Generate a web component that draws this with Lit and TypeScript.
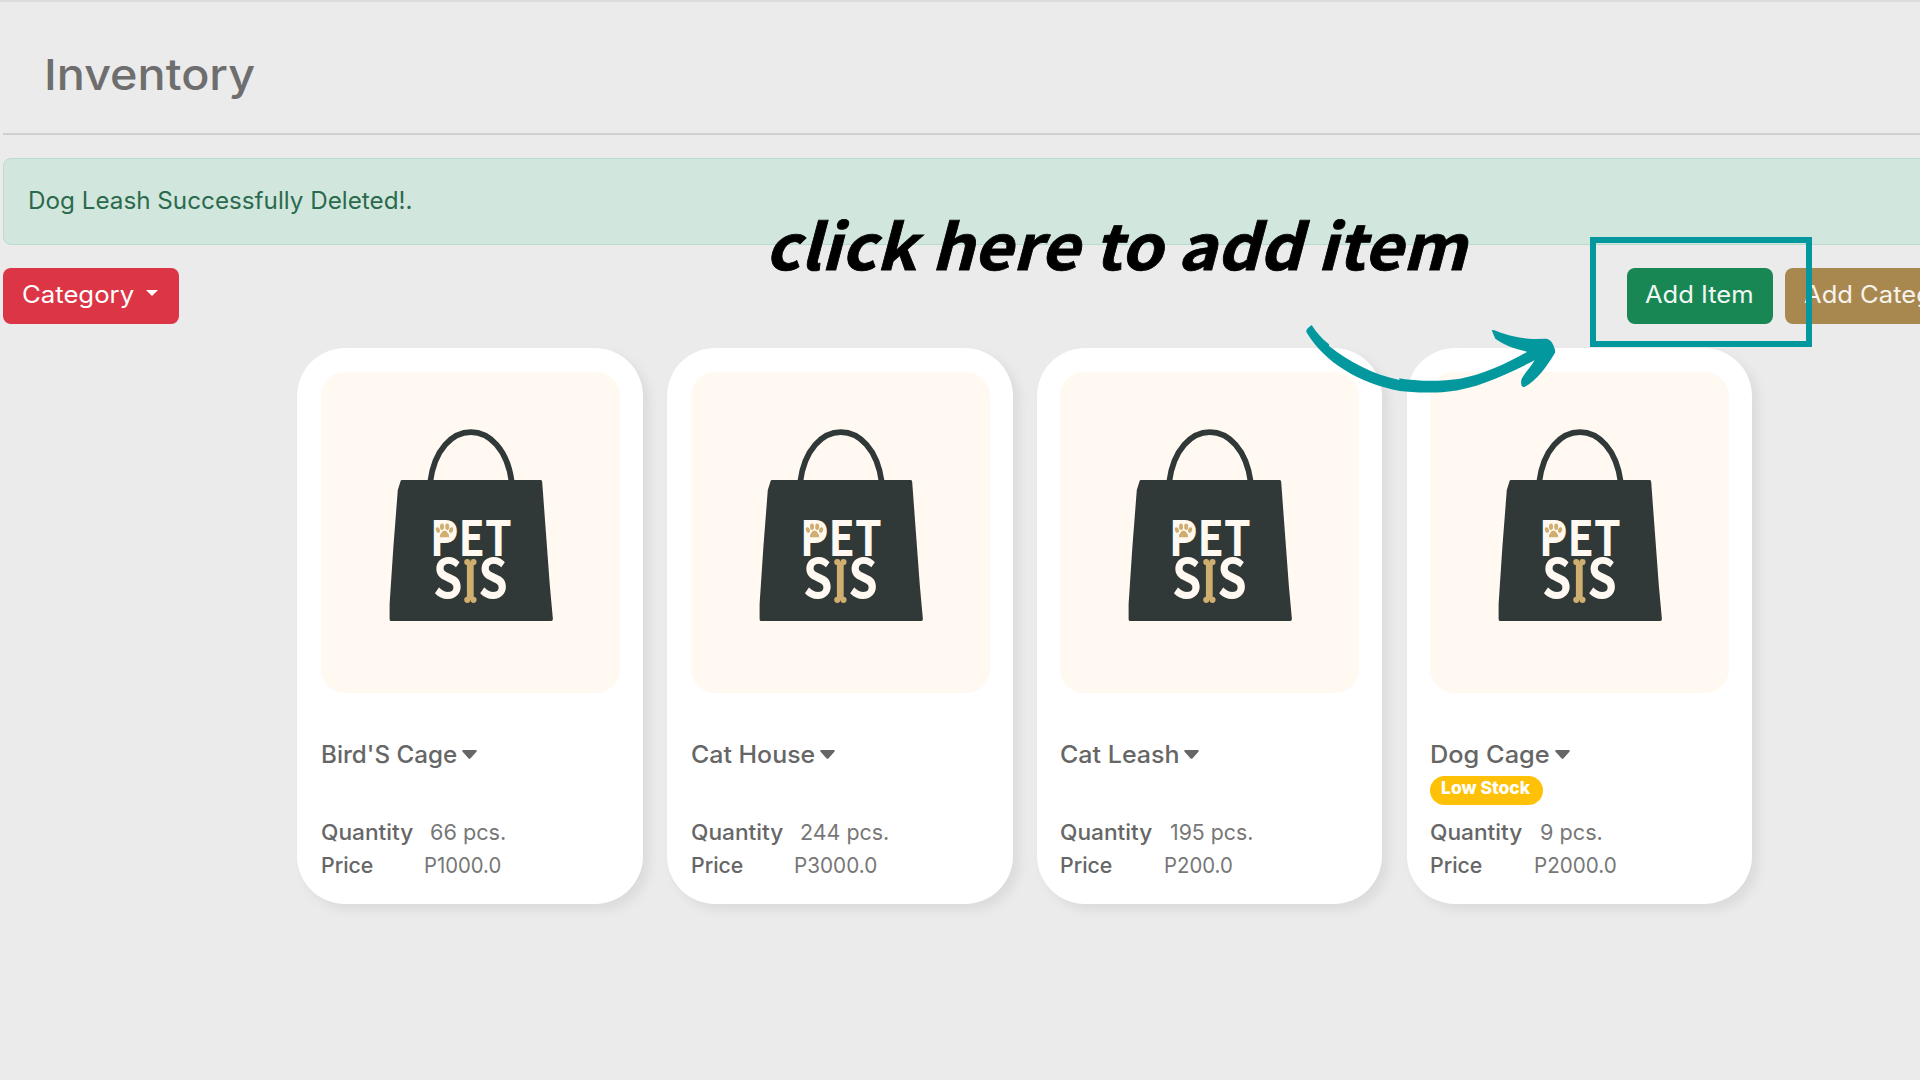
import { LitElement, html, css, svg } from "lit";
import { customElement, property } from "lit/decorators.js";
import { styleMap } from "lit/directives/style-map.js";

interface Item {
  name: string;
  nameWidth: number;
  quantity: string;
  quantityWidth: number;
  price: string;
  priceWidth: number;
  low?: boolean;
}

const ITEMS: Item[] = [
  { name: "Bird'S Cage", nameWidth: 134, quantity: "66 pcs.", quantityWidth: 74, price: "P1000.0", priceWidth: 75.5 },
  { name: "Cat House", nameWidth: 122, quantity: "244 pcs.", quantityWidth: 87, price: "P3000.0", priceWidth: 81.5 },
  { name: "Cat Leash", nameWidth: 117, quantity: "195 pcs.", quantityWidth: 81, price: "P200.0", priceWidth: 67 },
  { name: "Dog Cage", nameWidth: 117.5, quantity: "9 pcs.", quantityWidth: 60.5, price: "P2000.0", priceWidth: 81, low: true },
];

const measurer = document.createElement("canvas").getContext("2d")!;

/** A single line of text stretched so that it spans a given width. */
@customElement("fitted-text")
export class FittedText extends LitElement {
  static styles = css`
    :host { display: block; white-space: pre; }
    .line { display: block; transform-origin: 0 50%; }
  `;
  @property() text = "";
  @property() font = "";
  @property({ type: Number }) span = 0;

  render() {
    measurer.font = this.font;
    const m = measurer.measureText(this.text);
    const natural = m.actualBoundingBoxLeft + m.actualBoundingBoxRight;
    const scale = this.span / natural;
    return html`<span
      class="line"
      style=${styleMap({ width: `${this.span + 2}px`, transform: `scaleX(${scale.toFixed(4)})` })}
    >${this.text}</span>`;
  }
}

const fitted = (text: string, font: string, span: number) =>
  html`<fitted-text .text=${text} .font=${font} .span=${span}></fitted-text>`;

@customElement("item-card")
export class ItemCard extends LitElement {
  static styles = css`
    :host {
      display: flex;
      flex-direction: column;
      box-sizing: border-box;
      width: 345.5px;
      height: 555.5px;
      padding: 23.5px 23px 0 23.5px;
      border-radius: 48px;
      background: #fff;
      box-shadow: 6px 6px 12px rgba(0, 0, 0, 0.07);
      color: #666;
    }
    .photo { display: block; width: 299px; height: 321.5px; border-radius: 24px; background: #fff9f2; }
    .logo { font-family: "Noto Sans CJK SC", sans-serif; font-weight: 700; fill: #fff9f2; }
    .title {
      display: flex;
      align-items: center;
      gap: 5px;
      margin-top: 43.5px;
      font: 500 24px/36px Inter, sans-serif;
    }
    .caret { width: 15px; height: 9px; margin-top: -1px; fill: #666; }
    .status { height: 43.2px; }
    .badge {
      display: flex;
      box-sizing: border-box;
      width: 113px;
      height: 29.5px;
      margin-top: 3px;
      padding-left: 11px;
      border-radius: 15px;
      background: #ffc107;
      color: #fff;
      font: 800 17px/25px Inter, sans-serif;
    }
    .row { display: flex; font: 400 22px/33.4px Inter, sans-serif; color: #777; }
    .label { font-weight: 500; color: #666; }
    .quantity .label { width: 109.5px; }
    .price .label { width: 103.5px; }
  `;
  @property({ attribute: false }) item!: Item;

  private bag() {
    return svg`<g transform="translate(-0.7 0)">
      <path d="M109.9 110C118.5 43.5 182.6 43.5 191.4 110" fill="none" stroke="#313938" stroke-width="5.8"/>
      <path d="M81.5 108H220.5Q221.8 108 221.9 110L225.5 159L229.5 213L232.6 247Q232.6 249 231 249H70.5Q69.3 249 69.3 247V232L73 176L77.5 118L80 110Q80.2 108 81.5 108Z" fill="#313938"/>
      <text class="logo" x="109.8" y="184" font-size="49" textLength="81.5" lengthAdjust="spacingAndGlyphs">PET</text>
      <ellipse cx="124.5" cy="160" rx="8.5" ry="8"/>
      <g fill="#cfae70">
        <ellipse cx="117.6" cy="158" rx="1.9" ry="2.9" transform="rotate(-20 117.6 158)"/>
        <ellipse cx="121.7" cy="154.8" rx="2" ry="3.2"/>
        <ellipse cx="126.9" cy="154.8" rx="2" ry="3.2"/>
        <ellipse cx="130.8" cy="158" rx="1.9" ry="2.9" transform="rotate(20 130.8 158)"/>
        <path d="M124.2 158.6Q126.5 158.8 127.4 161Q129.2 162.2 128.8 165.2H119.6Q119.2 162.2 121 161Q121.9 158.8 124.2 158.6Z"/>
      </g>
      <text class="logo" x="112.8" y="225.8" font-size="54" textLength="29.5" lengthAdjust="spacingAndGlyphs">S</text>
      <text class="logo" x="158" y="225.8" font-size="54" textLength="29.5" lengthAdjust="spacingAndGlyphs">S</text>
      <g fill="#cfae70">
        <rect x="146.6" y="190" width="6.8" height="38"/>
        <circle cx="147" cy="190" r="3.1"/><circle cx="153.2" cy="190" r="3.1"/>
        <circle cx="147" cy="227.8" r="3.1"/><circle cx="153.2" cy="227.8" r="3.1"/>
      </g>
    </g>`;
  }

  render() {
    const i = this.item;
    return html`
      <svg class="photo" viewBox="0 0 299 321.5" fill="#fff9f2">${this.bag()}</svg>
      <div class="title">
        ${fitted(i.name, "500 24px Inter", i.nameWidth)}
        <svg class="caret" viewBox="0 0 15 9"><path d="M1.2 0H13.8Q15.4.3 14.4 1.8L8.6 8.3Q7.5 9.4 6.4 8.3L.6 1.8Q-.4.3 1.2 0Z"/></svg>
      </div>
      <div class="status">
        ${i.low ? html`<div class="badge">${fitted("Low Stock", "800 17px Inter", 90)}</div>` : ""}
      </div>
      <div class="row quantity">
        <span class="label">${fitted("Quantity", "500 22px Inter", 91.5)}</span>
        ${fitted(i.quantity, "400 22px Inter", i.quantityWidth)}
      </div>
      <div class="row price">
        <span class="label">${fitted("Price", "500 22px Inter", 50.5)}</span>
        ${fitted(i.price, "400 22px Inter", i.priceWidth)}
      </div>
    `;
  }
}

@customElement("app-root")
export class AppRoot extends LitElement {
  static styles = css`
    :host {
      display: block;
      position: relative;
      box-sizing: border-box;
      width: 1920px;
      height: 1080px;
      overflow: hidden;
      border-top: 2px solid #dcdcdc;
      background: #ebebeb;
      font-family: Inter, sans-serif;
    }
    .page { padding-left: 3.4px; }
    .header {
      box-sizing: border-box;
      height: 133px;
      padding: 40px 0 0 40.5px;
      border-bottom: 2px solid #d0d0d0;
      color: #6e6e6e;
      font: 500 43px/64px Inter, sans-serif;
    }
    .alert {
      box-sizing: border-box;
      width: 1940px;
      height: 87.5px;
      margin-top: 22.5px;
      padding: 23px 23.5px;
      border: 1.5px solid #badbcc;
      border-radius: 8px;
      background: #d1e7dd;
      color: #2c6a4d;
      font-size: 24px;
      line-height: 38px;
    }
    .toolbar { display: flex; width: 2100px; margin-top: 23px; }
    .btn {
      display: flex;
      align-items: center;
      box-sizing: border-box;
      height: 56px;
      padding: 0 18.5px 3px;
      border-radius: 8px;
      color: #fff;
      font-size: 24px;
      line-height: 36px;
      white-space: nowrap;
    }
    .category { width: 175.5px; gap: 12px; background: #dc3545; }
    .category svg { width: 12px; height: 6px; margin-top: -3px; fill: #fff; }
    .add-item { width: 146.5px; margin-left: 1448px; background: #198754; color: #f0f7f3; }
    .add-category { width: 220px; margin-left: 11.5px; padding-left: 19.5px; background: #a98850; color: #f7f3ed; }
    .cards { display: flex; gap: 24.3px; padding: 24.3px 0 0 293.9px; }
    .cards item-card { flex: none; }
    .note {
      position: absolute;
      left: 765px;
      top: 191px;
      color: #000;
      font: oblique 700 62.5px/100px "Noto Sans CJK SC", sans-serif;
      -webkit-text-stroke: 0.8px #000;
    }
    .frame {
      position: absolute;
      left: 1590px;
      top: 235px;
      box-sizing: border-box;
      width: 222px;
      height: 110px;
      border: 6px solid #03989e;
    }
    .arrow { position: absolute; left: 1290px; top: 308px; width: 280px; height: 100px; fill: #03989e; }
  `;

  render() {
    return html`
      <div class="page">
        <div class="header">${fitted("Inventory", "500 43px Inter", 207)}</div>
        <div class="alert">${fitted("Dog Leash Successfully Deleted!.", "400 24px Inter", 381.5)}</div>
        <div class="toolbar">
          <div class="btn category">
            ${fitted("Category", "400 24px Inter", 110.5)}
            <svg viewBox="0 0 12 6"><path d="M0 0H12L6 6Z"/></svg>
          </div>
          <div class="btn add-item">${fitted("Add Item", "400 24px Inter", 107.5)}</div>
          <div class="btn add-category">${fitted("Add Category", "400 24px Inter", 167)}</div>
        </div>
        <div class="cards">${ITEMS.map((item) => html`<item-card .item=${item}></item-card>`)}</div>
      </div>
      <div class="note">${fitted("click here to add item", 'oblique 700 62.5px "Noto Sans CJK SC"', 701)}</div>
      <div class="frame"></div>
      <svg class="arrow" viewBox="0 0 840 300">
        <path d="M65 45C78 66 96 86 117 103V108C180 158 250 193 328 210V205C350 209 372 211 400 212C440 214 480 210 510 206C580 193 650 160 712 125C672 116 640 104 616 86L605 61L611 60C650 77 695 86 730 87L770 86Q785 90 791 108Q797 122 795 128C770 170 740 212 701 232L695 228Q691 214 696 205C706 186 722 172 734 151C640 198 560 236 470 245C420 250 360 247 330 243C210 220 105 160 49 66Q48 58 54 54Z"/>
      </svg>
    `;
  }
}
